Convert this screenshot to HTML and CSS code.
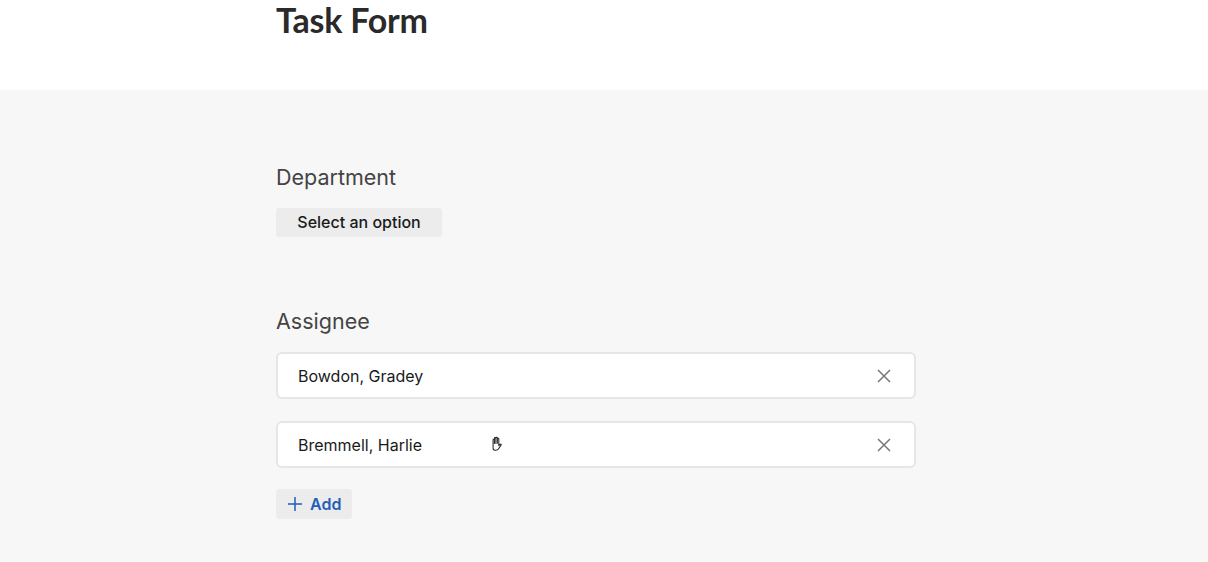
FILE: index.html
```html
<!DOCTYPE html>
<html>
<head>
<meta charset="utf-8">
<link rel="stylesheet" href="styles.css">
</head>
<body>
<header class="top">
  <div class="wrap"><h1 class="title">Task Form</h1></div>
</header>
<main class="main">
  <div class="wrap">
    <section class="field">
      <h2 class="label">Department</h2>
      <button class="select">Select an option</button>
    </section>
    <section class="field assignee">
      <h2 class="label">Assignee</h2>
      <div class="list">
        <div class="entry">
          <span class="name">Bowdon, Gradey</span>
          <svg class="x" viewBox="0 0 14 14" width="14" height="14"><path d="M1 1L13 13M13 1L1 13" stroke="#777" stroke-width="1.5" fill="none"/></svg>
        </div>
        <div class="entry">
          <span class="name">Bremmell, Harlie</span>
          <svg class="cursor" viewBox="0 0 16 16" width="18" height="18"><path d="M4.5 8.5V4.2c0-.7 1.2-.7 1.2 0V8M5.7 7.8V2.8c0-.8 1.3-.8 1.3 0v5M7 7.5V2.5c0-.8 1.3-.8 1.3 0v5.2M8.3 7.7V3.4c0-.8 1.3-.8 1.3 0v6.2l1-1.3c.5-.6 1.5 0 1 .7l-2 3c-.6 1-1.5 1.6-2.8 1.6H6.2c-1.2 0-1.7-1-1.7-2V8.5" fill="#fff" stroke="#222" stroke-width=".9" stroke-linejoin="round"/></svg>
          <svg class="x" viewBox="0 0 14 14" width="14" height="14"><path d="M1 1L13 13M13 1L1 13" stroke="#777" stroke-width="1.5" fill="none"/></svg>
        </div>
      </div>
      <button class="add">
        <svg viewBox="0 0 14 14" width="14" height="14"><path d="M7 0V14M0 7H14" stroke="#1f5fb8" stroke-width="1.5" fill="none"/></svg>
        <span>Add</span>
      </button>
    </section>
  </div>
</main>
</body>
</html>
```
FILE: styles.css
```css
* { box-sizing: border-box; }
html, body { margin: 0; padding: 0; }
body {
  font-family: "Inter", "Liberation Sans", Arial, sans-serif;
  color: #1a1a1a;
  background: #f7f7f7;
}
.wrap { width: 640px; margin-left: 276px; }
.top { background: #fff; height: 90px; }
.title {
  margin: 0;
  font-family: "Lato", sans-serif;
  font-weight: 700;
  font-size: 34px;
  line-height: 40px;
  color: #2a2a2a;
  letter-spacing: -0.2px;
}
.main { padding-top: 73px; min-height: 472px; }
.field { display: flex; flex-direction: column; align-items: flex-start; }
.label {
  margin: 0 0 17px 0;
  font-weight: 400;
  font-size: 21.5px;
  line-height: 28px;
  color: #444;
}
.select {
  font-family: inherit;
  font-size: 16px;
  font-weight: 500;
  color: #1a1a1a;
  background: #ececec;
  border: none;
  border-radius: 3px;
  height: 29px;
  width: 166px;
  padding: 0 0 1px 0;
}
.assignee { margin-top: 70px; }
.list { display: flex; flex-direction: column; gap: 22px; width: 640px; }
.entry {
  position: relative;
  display: flex;
  align-items: center;
  justify-content: space-between;
  height: 47px;
  background: #fff;
  border: 2px solid #e6e6e6;
  border-radius: 6px;
  padding: 1px 23px 0 20px;
  font-size: 16px;
}
.x { display: block; }
.cursor { position: absolute; left: 210px; top: 12px; }
.add {
  margin-top: 21px;
  display: flex;
  align-items: center;
  gap: 8px;
  height: 30px;
  width: 76px;
  padding: 0 0 0 12px;
  background: #ececec;
  border: none;
  border-radius: 3px;
  font-family: inherit;
  font-size: 16px;
  font-weight: 600;
  color: #1f5fb8;
}
```
